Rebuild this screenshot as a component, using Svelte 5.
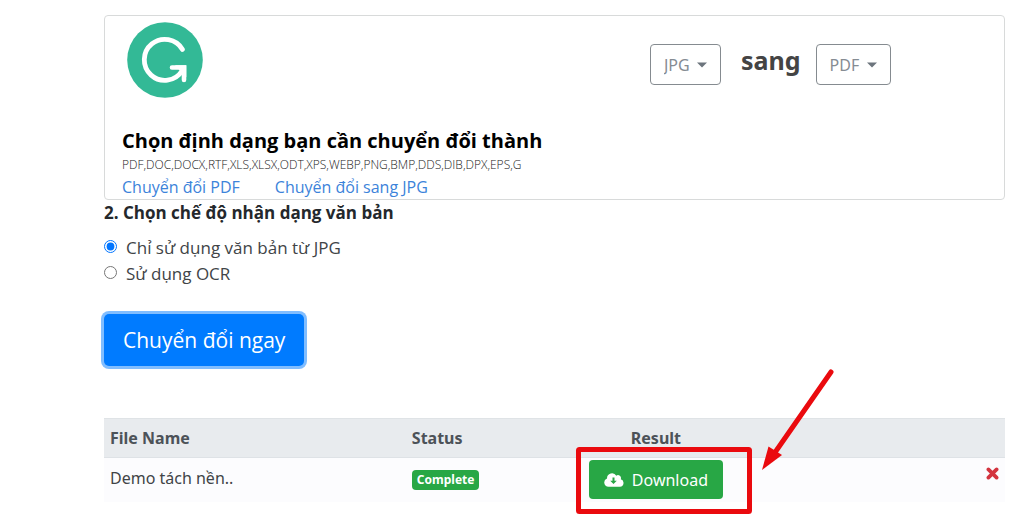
<script>
  let source = $state('JPG');
  let target = $state('PDF');
  let mode = $state('text');
  let files = $state([{ name: 'Demo tách nền..', status: 'Complete' }]);
  const formats = 'PDF,DOC,DOCX,RTF,XLS,XLSX,ODT,XPS,WEBP,PNG,BMP,DDS,DIB,DPX,EPS,G';
</script>

{#snippet caret()}
  <svg class="caret" viewBox="0 0 10 6" aria-hidden="true"><path d="M0 .5h10L5 5.5z" fill="#6c757d" /></svg>
{/snippet}

<main>
  <section class="card">
    <div class="top">
      <svg class="logo" viewBox="0 0 76 76" aria-hidden="true">
        <circle cx="38" cy="38" r="37.8" fill="#33b996" />
        <path d="M55.5 27.5A20.5 20.5 0 1 0 55 49" fill="none" stroke="#fff" stroke-width="4.8" stroke-linecap="round" />
        <path d="M45 45.5h12v12.5" fill="none" stroke="#fff" stroke-width="4.6" stroke-linecap="round" />
        <path d="M48 43.2h11.3v12l-5-5z" fill="#fff" />
      </svg>
      <div class="formats">
        <span class="pick">
          <select aria-label="JPG" bind:value={source}><option>JPG</option></select>
          {@render caret()}
        </span>
        <strong>sang</strong>
        <span class="pick">
          <select aria-label="PDF" bind:value={target}><option>PDF</option></select>
          {@render caret()}
        </span>
      </div>
    </div>
    <h1>Chọn định dạng bạn cần chuyển đổi thành</h1>
    <p class="list">{formats}</p>
    <nav>
      <a href="#pdf">Chuyển đổi PDF</a>
      <a href="#jpg">Chuyển đổi sang JPG</a>
    </nav>
  </section>

  <fieldset>
    <legend>2. Chọn chế độ nhận dạng văn bản</legend>
    <label><input type="radio" name="mode" value="text" bind:group={mode} />Chỉ sử dụng văn bản từ JPG</label>
    <label><input type="radio" name="mode" value="ocr" bind:group={mode} />Sử dụng OCR</label>
  </fieldset>

  <button class="convert" type="button">Chuyển đổi ngay</button>

  <table>
    <thead>
      <tr>
        <th class="name">File Name</th>
        <th class="status">Status</th>
        <th class="result">Result</th>
        <th></th>
        <th class="remove"></th>
      </tr>
    </thead>
    <tbody>
      {#each files as file}
        <tr>
          <td class="file">{file.name}</td>
          <td><span class="badge">{file.status}</span></td>
          <td class="result">
            <div class="action">
              <button class="download" type="button">
                <svg viewBox="0 0 20 14" aria-hidden="true">
                  <path d="M16.8 6.2A3 3 0 0 0 12.3 2.7 5 5 0 0 0 3 5.2v.3A4.3 4.3 0 0 0 4.5 13.8H16A3.9 3.9 0 0 0 16.8 6.2z" fill="#fff" />
                  <path d="M8.5 4.5h2v3.2h2.3L9.5 11 6.2 7.7h2.3z" fill="#28a745" />
                </svg>
                Download
              </button>
              <svg class="mark" viewBox="0 0 264 150" aria-hidden="true">
                <rect x="4.5" y="84.5" width="171" height="62" rx="1" fill="none" stroke="#ea0a0e" stroke-width="5" />
                <path d="M257 7 202 86" stroke="#ea0a0e" stroke-width="5" stroke-linecap="round" />
                <path d="M188 105 194.5 81.500 208 90z" fill="#ea0a0e" />
              </svg>
            </div>
          </td>
          <td></td>
          <td class="remove">
            <button class="delete" type="button" aria-label="×">
              <svg viewBox="0 0 12 12" aria-hidden="true"><path d="M2.2 2.2l7.6 7.6M9.8 2.2l-7.6 7.6" stroke="#d3343f" stroke-width="3.4" stroke-linecap="round" /></svg>
            </button>
          </td>
        </tr>
      {/each}
    </tbody>
  </table>
</main>

<style>
  :global(body) {
    background: #fff;
  }
  main {
    padding: 15px 19px 16px 104px;
    font: 16px/24px 'Noto Sans', sans-serif;
    color: #414447;
  }
  button,
  select {
    font: inherit;
    cursor: pointer;
  }
  svg {
    display: block;
  }
  .card {
    border: 1px solid #d8dada;
    border-radius: 4px;
    padding: 6px 17px 0;
  }
  .card,
  fieldset,
  .convert {
    font-family: 'Open Sans', 'Noto Sans', sans-serif;
  }
  .top {
    display: grid;
    grid-template-columns: 528px auto;
    height: 105px;
    align-items: start;
  }
  .logo {
    width: 76px;
    margin-left: 5px;
  }
  .formats {
    display: flex;
    align-items: center;
    padding-top: 22px;
    font-family: 'Noto Sans', sans-serif;
  }
  .formats strong {
    margin: -10px 15px 0 20px;
    font-size: 25px;
    color: #444;
  }
  .pick {
    display: grid;
    align-items: center;
  }
  .pick select,
  .caret {
    grid-area: 1 / 1;
  }
  .pick select {
    appearance: none;
    height: 41px;
    padding: 0 30px 0 13px;
    border: 1px solid #858b90;
    border-radius: 4px;
    background: #fff;
    color: #858c93;
  }
  .caret {
    width: 10px;
    justify-self: end;
    margin-right: 14px;
    pointer-events: none;
  }
  h1 {
    margin: 0;
    font-size: 20px;
    line-height: 28px;
    color: #000;
  }
  .list {
    margin: 0;
    font-size: 12px;
    font-weight: 300;
    line-height: 20px;
    color: #222;
  }
  nav {
    display: flex;
    gap: 35px;
    line-height: 24px;
  }
  a {
    color: #3c83da;
    text-decoration: none;
  }
  fieldset {
    margin: 0;
    padding: 0;
    border: 0;
    font-size: 17px;
  }
  legend {
    padding: 0;
    margin-bottom: 9px;
    line-height: 26px;
    font-weight: 700;
    color: #24282c;
  }
  label {
    display: flex;
    align-items: flex-start;
    gap: 9px;
    line-height: 26px;
  }
  input {
    width: 13px;
    height: 13px;
    margin: 5px 0 0;
  }
  .convert {
    display: block;
    margin: 27px 0 52px;
    padding: 0 19px;
    height: 52px;
    border: 0;
    border-radius: 5px;
    background: #007bff;
    box-shadow: 0 0 0 3px #80bdff;
    color: #fff;
    font-size: 21px;
  }
  table {
    width: 100%;
    table-layout: fixed;
    border-collapse: collapse;
  }
  th,
  td {
    box-sizing: border-box;
    padding: 0 6px;
    text-align: left;
  }
  th {
    height: 39px;
    background: #e8ebee;
    border-top: 1px solid #dfe3e6;
    border-bottom: 1px solid #dee2e6;
    color: #4c5258;
  }
  td {
    height: 44px;
    background: #fcfcfe;
  }
  .file {
    padding-bottom: 4px;
  }
  .name {
    width: 33.5%;
  }
  .status {
    width: 19.6%;
  }
  .result {
    width: 147px;
    padding: 0;
    text-align: center;
  }
  .remove {
    width: 44px;
    padding: 0 6px;
  }
  .badge {
    display: block;
    width: fit-content;
    padding: 0 5px;
    border-radius: 4px;
    background: #28a745;
    color: #fff;
    font-size: 12px;
    font-weight: 700;
    line-height: 20px;
  }
  .action {
    position: relative;
    width: fit-content;
    margin: 0 auto;
  }
  .download {
    display: flex;
    align-items: center;
    gap: 8px;
    height: 39px;
    padding: 0 15px;
    border: 0;
    border-radius: 4px;
    background: #28a745;
    color: #fff;
  }
  .download svg {
    width: 20px;
  }
  .mark {
    position: absolute;
    left: -15px;
    bottom: -16px;
    width: 264px;
    pointer-events: none;
  }
  .delete {
    display: block;
    margin: 0 0 12px auto;
    padding: 0;
    border: 0;
    background: none;
  }
  .delete svg {
    width: 13px;
  }
</style>
